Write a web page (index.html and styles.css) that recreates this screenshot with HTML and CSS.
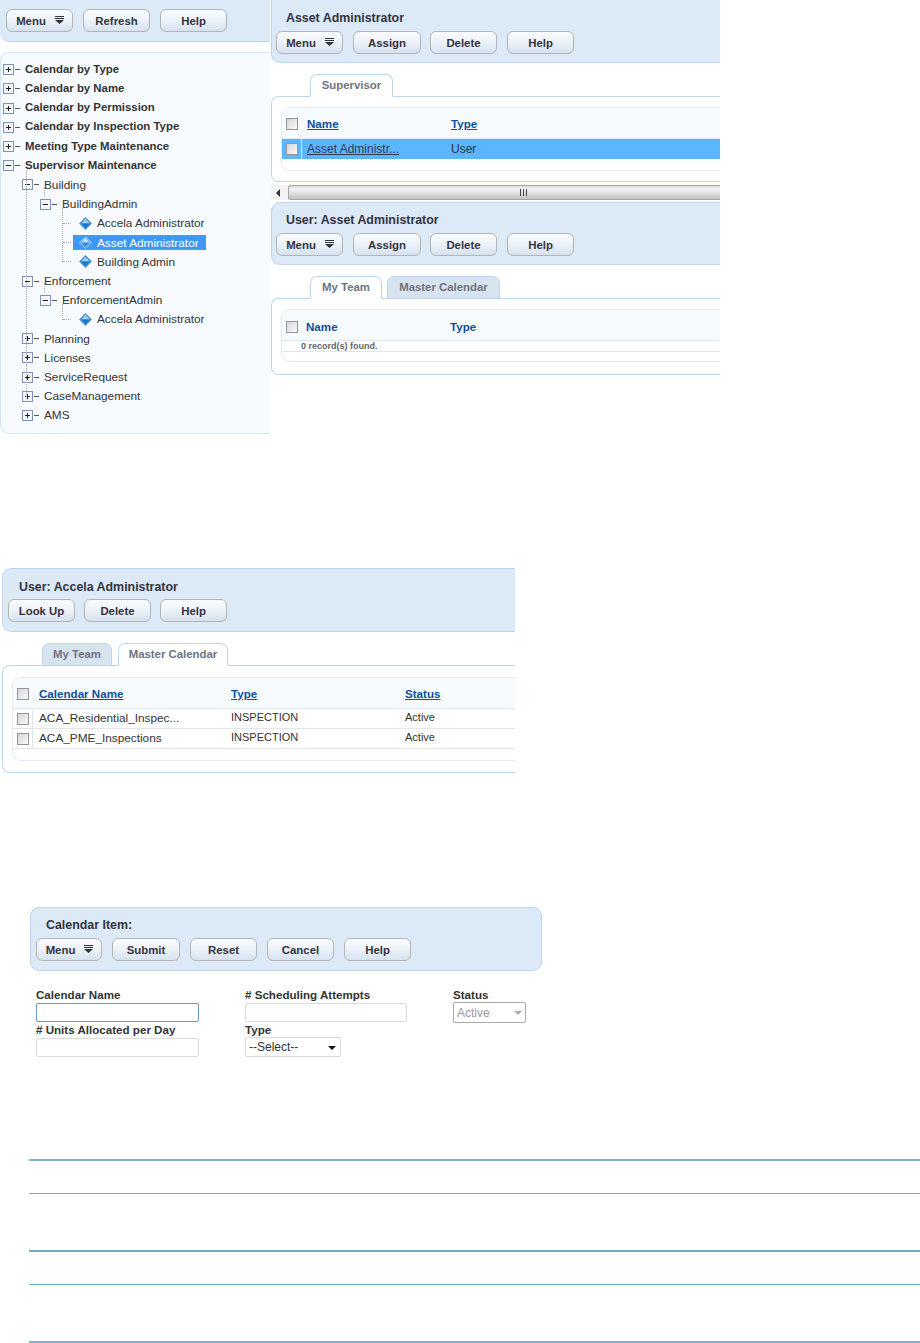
FILE: index.html
```html
<!DOCTYPE html>
<html lang="en">
<head>
<meta charset="utf-8">
<title>Calendar administration</title>
<link rel="stylesheet" href="styles.css">
</head>
<body>
<svg class="defs" width="0" height="0" aria-hidden="true">
  <symbol id="plus" viewBox="0 0 11 11"><rect x=".5" y=".5" width="10" height="10" fill="#f4f6fa" stroke="#7d93b8"/><path d="M3 5.5h5M5.5 3v5" stroke="#222" fill="none"/></symbol>
  <symbol id="minus" viewBox="0 0 11 11"><rect x=".5" y=".5" width="10" height="10" fill="#f4f6fa" stroke="#7d93b8"/><path d="M3 5.5h5" stroke="#222" fill="none"/></symbol>
  <symbol id="gem" viewBox="0 0 14 14"><path d="M7 .5 13.5 7 7 13.5.5 7z" fill="#3d93dc" stroke="#2c7cc4" stroke-width=".6"/><path d="M7 2 11 6.5H3z" fill="#9fd2f5"/><path d="M7 12 3 7.5h8z" fill="#1f78c9"/></symbol>
  <symbol id="gem-sel" viewBox="0 0 14 14"><path d="M7 .5 13.5 7 7 13.5.5 7z" fill="#6aaee8" stroke="#a9d3f5" stroke-width=".8"/><path d="M7 2 11 6.5H3z" fill="#bfe0f8"/><path d="M7 12 3 7.5h8z" fill="#3c8ed8"/></symbol>
  <symbol id="menu" viewBox="0 0 9 9"><path d="M0 .5h9M0 2.5h9" stroke="#333" fill="none"/><path d="M0 4h9L4.5 8z" fill="#333"/></symbol>
</svg>

<section class="top">
  <div class="left">
    <div class="bar bar-left">
      <div class="buttons">
        <button class="btn btn-menu">Menu <svg class="menu-ico"><use href="#menu"/></svg></button>
        <button class="btn">Refresh</button>
        <button class="btn">Help</button>
      </div>
    </div>
    <nav class="tree">
      <div class="row root"><svg class="exp"><use href="#plus"/></svg><i class="dash"></i><span>Calendar by Type</span></div>
      <div class="row root"><svg class="exp"><use href="#plus"/></svg><i class="dash"></i><span>Calendar by Name</span></div>
      <div class="row root"><svg class="exp"><use href="#plus"/></svg><i class="dash"></i><span>Calendar by Permission</span></div>
      <div class="row root"><svg class="exp"><use href="#plus"/></svg><i class="dash"></i><span>Calendar by Inspection Type</span></div>
      <div class="row root"><svg class="exp"><use href="#plus"/></svg><i class="dash"></i><span>Meeting Type Maintenance</span></div>
      <div class="row root"><svg class="exp"><use href="#minus"/></svg><i class="dash"></i><span>Supervisor Maintenance</span></div>
      <div class="branch lvl2">
        <div class="row"><svg class="exp"><use href="#minus"/></svg><i class="dash"></i><span>Building</span></div>
        <div class="branch lvl3 short">
          <div class="row"><svg class="exp"><use href="#minus"/></svg><i class="dash"></i><span>BuildingAdmin</span></div>
          <div class="branch lvl4">
            <div class="row leaf"><i class="dots"></i><svg class="gem"><use href="#gem"/></svg><span>Accela Administrator</span></div>
            <div class="row leaf selected"><i class="dots"></i><div class="sel"><div class="sel-in"><svg class="gem"><use href="#gem-sel"/></svg><span>Asset Administrator</span></div></div></div>
            <div class="row leaf"><i class="dots"></i><svg class="gem"><use href="#gem"/></svg><span>Building Admin</span></div>
          </div>
        </div>
        <div class="row"><svg class="exp"><use href="#minus"/></svg><i class="dash"></i><span>Enforcement</span></div>
        <div class="branch lvl3 short">
          <div class="row"><svg class="exp"><use href="#minus"/></svg><i class="dash"></i><span>EnforcementAdmin</span></div>
          <div class="branch lvl4">
            <div class="row leaf"><i class="dots"></i><svg class="gem"><use href="#gem"/></svg><span>Accela Administrator</span></div>
          </div>
        </div>
        <div class="row"><svg class="exp"><use href="#plus"/></svg><i class="dash"></i><span>Planning</span></div>
        <div class="row"><svg class="exp"><use href="#plus"/></svg><i class="dash"></i><span>Licenses</span></div>
        <div class="row"><svg class="exp"><use href="#plus"/></svg><i class="dash"></i><span>ServiceRequest</span></div>
        <div class="row"><svg class="exp"><use href="#plus"/></svg><i class="dash"></i><span>CaseManagement</span></div>
        <div class="row"><svg class="exp"><use href="#plus"/></svg><i class="dash"></i><span>AMS</span></div>
      </div>
    </nav>
  </div>

  <div class="right">
    <div class="bar bar-right">
      <h2 class="title">Asset Administrator</h2>
      <div class="buttons">
        <button class="btn btn-menu">Menu <svg class="menu-ico"><use href="#menu"/></svg></button>
        <button class="btn w68">Assign</button>
        <button class="btn">Delete</button>
        <button class="btn">Help</button>
      </div>
    </div>
    <div class="tabs tabs-a">
      <span class="tab active w83">Supervisor</span>
    </div>
    <div class="panel panel-a">
      <div class="grid">
        <div class="trow thead"><div class="cb-cell"><i class="cb"></i></div><a class="c-name link">Name</a><a class="c-type link">Type</a></div>
        <div class="trow tsel"><div class="cb-cell"><i class="cb"></i></div><a class="c-name cell-link">Asset Administr...</a><span class="c-type">User</span></div>
        <div class="grid-foot"></div>
      </div>
    </div>
    <div class="hscroll">
      <div class="hs-btn"><i class="hs-arrow"></i></div>
      <div class="hs-thumb"><span class="hs-grip"></span></div>
    </div>
    <div class="bar bar-right bar-b">
      <h2 class="title">User: Asset Administrator</h2>
      <div class="buttons">
        <button class="btn btn-menu">Menu <svg class="menu-ico"><use href="#menu"/></svg></button>
        <button class="btn w68">Assign</button>
        <button class="btn">Delete</button>
        <button class="btn">Help</button>
      </div>
    </div>
    <div class="tabs tabs-a">
      <span class="tab active w72">My Team</span>
      <span class="tab w113">Master Calendar</span>
    </div>
    <div class="panel panel-b">
      <div class="grid">
        <div class="trow thead"><div class="cb-cell"><i class="cb"></i></div><span class="c-name blue">Name</span><span class="c-type blue">Type</span></div>
        <div class="found">0 record(s) found.</div>
        <div class="grid-foot short-foot"></div>
      </div>
    </div>
  </div>
</section>

<section class="fig fig-2">
  <div class="bar bar-right">
    <h2 class="title">User: Accela Administrator</h2>
    <div class="buttons">
      <button class="btn">Look Up</button>
      <button class="btn">Delete</button>
      <button class="btn">Help</button>
    </div>
  </div>
  <div class="tabs tabs-c">
    <span class="tab w70">My Team</span>
    <span class="tab active w110">Master Calendar</span>
  </div>
  <div class="panel panel-c">
    <div class="grid">
      <div class="trow thead"><div class="cb-cell"><i class="cb"></i></div><a class="c1 link">Calendar Name</a><a class="c2 link">Type</a><a class="c3 link">Status</a></div>
      <div class="trow body"><div class="cb-cell"><i class="cb"></i></div><span class="c1">ACA_Residential_Inspec...</span><span class="c2">INSPECTION</span><span class="c3">Active</span></div>
      <div class="trow body"><div class="cb-cell"><i class="cb"></i></div><span class="c1">ACA_PME_Inspections</span><span class="c2">INSPECTION</span><span class="c3">Active</span></div>
      <div class="grid-foot"></div>
    </div>
  </div>
</section>

<section class="fig fig-3">
  <div class="bar bar-full">
    <h2 class="title">Calendar Item:</h2>
    <div class="buttons">
      <button class="btn btn-menu">Menu <svg class="menu-ico"><use href="#menu"/></svg></button>
      <button class="btn w68">Submit</button>
      <button class="btn">Reset</button>
      <button class="btn">Cancel</button>
      <button class="btn">Help</button>
    </div>
  </div>
  <form class="form">
    <label class="field"><span class="lbl">Calendar Name</span><input class="input focus w163" type="text"></label>
    <label class="field"><span class="lbl"># Scheduling Attempts</span><input class="input w162" type="text"></label>
    <label class="field"><span class="lbl">Status</span><span class="sel-wrap off"><select class="select w73" disabled><option>Active</option></select></span></label>
    <label class="field"><span class="lbl"># Units Allocated per Day</span><input class="input w163" type="text"></label>
    <label class="field"><span class="lbl">Type</span><span class="sel-wrap"><select class="select w96"><option>--Select--</option></select></span></label>
  </form>
</section>

<section class="rules">
  <hr class="rule r1">
  <hr class="rule r2">
  <hr class="rule r3">
  <hr class="rule r4">
  <hr class="rule r5">
</section>
</body>
</html>
```
FILE: styles.css
```css
* { box-sizing: border-box; }
html, body { margin: 0; padding: 0; background: #fff; }
body { width: 920px; height: 1343px; overflow: hidden; font: 12px/1.2 "Liberation Sans", Arial, sans-serif; color: #333; }
.defs { position: absolute; }

.top { display: flex; height: 433px; align-items: flex-start; }
.left { width: 271px; flex: none; }
.right { width: 449px; flex: none; }

.bar { background: #dce9f7; border: 1px solid #bcd6ef; border-right: 0; }
.bar-left { height: 42px; border-top: 0; border-left: 0; border-radius: 0 0 0 9px; padding: 9px 0 0 6px; width: 270px; }
.bar-right { height: 63px; border-top: 0; border-radius: 0 0 0 9px; padding: 0 0 0 4px; }
.bar-b { border-top: 1px solid #bcd6ef; border-radius: 9px 0 0 9px; }
.bar-b .title { padding-top: 10px; height: 30px; }
.bar-full { height: 64px; border: 1px solid #bcd6ef; border-radius: 9px; padding: 0 0 0 5px; }

.title { margin: 0; padding: 11px 0 0 10px; height: 31px; font-size: 12.4px; line-height: 15px; font-weight: bold; color: #33333f; }
.buttons { display: flex; gap: 10px; }
.btn { height: 23px; width: 67px; padding: 0; border: 1px solid #b4b4b4; border-radius: 6px; background: linear-gradient(#fbfcfe, #eef3f9 45%, #d6e2f0); font: bold 11.4px "Liberation Sans", Arial, sans-serif; color: #33333f; display: inline-flex; align-items: center; justify-content: center; }
.btn-menu { gap: 9px; padding-left: 1px; }
.w68 { width: 68px; margin-right: -1px; }
.menu-ico { width: 9px; height: 9px; }

.tree { margin-top: 10px; width: 270px; height: 382px; background: #f7fbff; border: 1px solid #d3e4f5; border-left-width: 1px; border-right: 0; border-radius: 9px 0 0 9px; padding: 7px 0 0 2px; font-size: 11.8px; color: #333; }
.row { height: 19.23px; display: flex; align-items: center; white-space: nowrap; }
.root { font-weight: bold; font-size: 11.4px; }
.exp { width: 11px; height: 11px; flex: none; }
.dash { width: 5px; height: 1px; background: #555; margin: 0 5px 0 1px; flex: none; }
.branch { position: relative; }
.lvl2 { margin-left: 19px; }
.lvl2::before { content: ""; position: absolute; left: 4px; top: -7px; height: 231px; border-left: 1px dotted #aaa; }
.lvl3 { margin-left: 18px; }
.lvl3::before { content: ""; position: absolute; left: 4px; top: -8px; height: 10px; border-left: 1px dotted #aaa; }
.lvl4 { margin-left: 19px; }
.lvl4::before { content: ""; position: absolute; left: 3px; top: -6px; bottom: 9px; border-left: 1px dotted #aaa; }
.leaf { padding-left: 4px; }
.dots { width: 8px; height: 0; border-top: 1px dotted #aaa; margin-right: 8px; flex: none; }
.gem { width: 13px; height: 13px; flex: none; margin-right: 5px; }
.selected .dots { margin-right: 2px; }
.sel { display: flex; align-items: center; height: 15px; width: 133px; padding-left: 6px; background: #3f97f5; color: #fff; }
.sel-in { display: flex; align-items: center; width: 120px; height: 15px; outline: 1px dotted #c9835a; outline-offset: -1px; }

.tabs { display: flex; align-items: flex-end; gap: 5px; }
.tabs-a { height: 34px; padding-left: 39px; margin-top: -1px; position: relative; z-index: 1; }
.tabs-c { height: 33px; padding-left: 40px; gap: 6px; position: relative; z-index: 1; }
.tab { height: 23px; margin-bottom: -1px; border: 1px solid #bcd6ef; border-radius: 7px 7px 0 0; background: #d7e3ef; color: #6d7480; font-weight: bold; font-size: 11.4px; display: flex; align-items: center; justify-content: center; }
.tab.active { background: #fff; border-bottom-color: #fff; }
.w83 { width: 83px; }
.w72 { width: 72px; }
.w113 { width: 113px; }
.w70 { width: 70px; }
.w110 { width: 110px; }

.panel { border: 1px solid #bcd6ef; border-right: 0; border-radius: 7px 0 0 7px; padding: 10px 0 0 9px; background: #fff; }
.panel-a { height: 86px; }
.panel-a .thead { padding-top: 2px; }
.panel-b { height: 77px; }
.panel-b .thead { padding-top: 4px; }
.panel-b .c-name { margin-left: 4px; width: 144px; }
.panel-c { height: 108px; padding-top: 11px; }
.panel-c .thead { padding-top: 2px; }
.grid { border: 1px solid #dfeaf4; border-right: 0; border-radius: 9px 0 0 9px; overflow: hidden; }
.trow { display: flex; align-items: center; position: relative; }
.thead { height: 31px; background: #f8fbfe; border-bottom: 1px solid #d8e7f5; font-weight: bold; font-size: 11.6px; }
.tsel { height: 20px; background: #5cb6ff; }
.tsel .cb-cell { border-right-color: #cfe6fb; }
.cb-cell { width: 20px; height: 100%; flex: none; display: flex; align-items: center; justify-content: center; border-right: 1px solid transparent; }
.cb { display: block; width: 12px; height: 12px; border: 1px solid #959595; background: linear-gradient(135deg, #d5d5d5, #fafafa); }
.link { color: #0b4f9e; text-decoration: underline; }
.blue { color: #0b4f9e; }
.c-name { margin-left: 5px; width: 144px; }
.c-type { width: 100px; }
.cell-link { color: #333a52; text-decoration: underline; }
.grid-foot { height: 11px; background: #fff; }
.short-foot { height: 9px; }
.found { height: 11px; border-bottom: 1px solid #dfe6ec; font-size: 9px; line-height: 10px; font-weight: bold; color: #666; padding-left: 19px; }

.hscroll { height: 15px; margin-top: 3px; display: flex; background: #eee; position: relative; }
.hs-btn { width: 17px; display: flex; align-items: center; justify-content: center; background: #f3f3f3; padding-right: 3px; }
.hs-arrow { width: 0; height: 0; border: 4px solid transparent; border-left-width: 0; border-right-color: #333; }
.hs-thumb { flex: 1; border: 1px solid #a5a5a5; border-right: 0; border-radius: 3px 0 0 3px; background: linear-gradient(#dcdcdc, #f3f3f3 25%, #c2c2c2); position: relative; }
.hs-grip { position: absolute; left: 231px; top: 3px; width: 7px; height: 7px; background: repeating-linear-gradient(90deg, #444 0 1px, transparent 1px 3px); }
.hscroll + .bar { margin-top: 2px; }

.fig { display: block; }
.fig-2 { margin: 135px 0 0 2px; width: 513px; }
.fig-2 .bar { height: 64px; border-top: 1px solid #bcd6ef; border-radius: 9px 0 0 9px; padding-left: 5px; }
.fig-2 .title { padding-left: 11px; height: 30px; padding-top: 11px; }
.fig-2 .buttons { gap: 9px; }
.fig-2 .btn { width: 67px; }
.body { height: 20px; border-bottom: 1px solid #e2e6ea; background: #fff; }
.body .cb-cell { border-right: 1px solid #dfe6ec; }
.body span { margin-bottom: 1px; }
.c1 { margin-left: 6px; width: 192px; }
.c2 { width: 174px; }
.c3 { width: 100px; }
.body .c1 { font-size: 11.8px; }
.body .c2, .body .c3 { font-size: 11px; }

.fig-3 { margin: 134px 0 0 30px; width: 512px; }
.fig-3 .title { padding-top: 10px; height: 30px; }
.fig-3 .btn-menu { width: 66px; }
.fig-3 .w68 { margin-right: 0; }
.form { display: grid; grid-template-columns: 209px 208px 1fr; grid-template-rows: 35px 35px; margin-top: 17px; padding-left: 6px; }
.field { display: flex; flex-direction: column; align-items: flex-start; }
.lbl { font-weight: bold; font-size: 11.6px; line-height: 14px; color: #333; height: 15px; }
.input { height: 19px; border: 1px solid #dcdcdc; border-radius: 2px; background: #fff; padding: 0; display: block; flex: none; }
.input.focus { border-color: #6a9ac4; }
.w163 { width: 163px; }
.w162 { width: 162px; }
.sel-wrap { position: relative; display: block; margin-top: -1px; }
.sel-wrap::after { content: ""; position: absolute; right: 5px; top: 9px; border: 4px solid transparent; border-bottom-width: 0; border-top-color: #111; }
.sel-wrap.off::after { border-top-color: #aaa; right: 4px; }
.select { appearance: none; -webkit-appearance: none; height: 20px; border: 1px solid #d8d8d8; border-radius: 2px; background: #fff; font: 12px "Liberation Sans", Arial, sans-serif; color: #333; padding: 0 0 0 3px; display: block; }
.select:disabled { color: #9a9a9a; border-color: #aaa; opacity: 1; height: 21px; }
.w73 { width: 73px; }
.w96 { width: 96px; }

.rules { margin: 0 0 0 29px; }
.rule { margin: 0; border: 0; height: 2px; background: #7fb3c5; }
.r1 { margin-top: 101px; }
.r2 { margin-top: 32px; height: 1px; background: #78a9ba; }
.r3 { margin-top: 56px; background: #72adc1; }
.r4 { margin-top: 32px; height: 1px; background: #6fb0c3; }
.r5 { margin-top: 56px; }
```
